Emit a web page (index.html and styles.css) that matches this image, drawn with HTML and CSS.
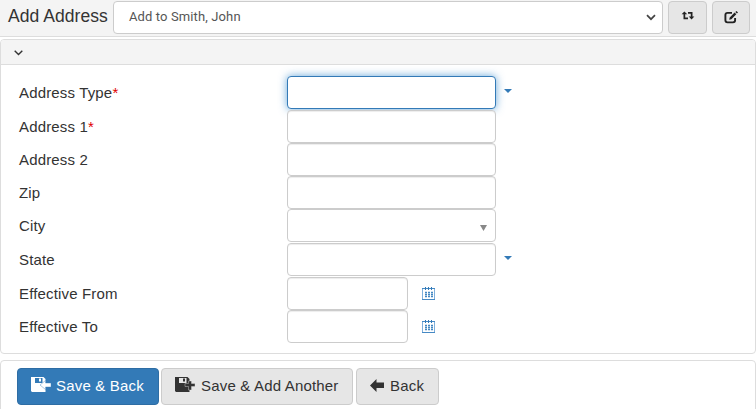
FILE: index.html
```html
<!DOCTYPE html>
<html lang="en">
<head>
<meta charset="utf-8">
<title>Add Address</title>
<link rel="stylesheet" href="styles.css">
</head>
<body>
<svg class="defs" width="0" height="0">
  <symbol id="disk" viewBox="0 0 21 16">
    <path fill="currentColor" fill-rule="evenodd" d="M0 0h12.500L14.500 2V15H1L0 14zM4 1v5h7.500V1z"/>
    <path fill="currentColor" d="M8 1.500h2v3H8z"/>
  </symbol>
  <symbol id="calendar" viewBox="0 0 14 14">
    <path d="M.500 1v12M12.500 1v12" fill="none" stroke="#7fb0dc"/>
    <path d="M0 1.500h13M0 12.500h13" stroke="#4689c4"/>
    <path d="M3.500 0v3M6.500 0v3M9.500 0v3" stroke="#337ab7"/>
    <path d="M3 5.500h8M3 7.500h8M3 9.500h8" stroke="#4387c2" stroke-width="1.300" stroke-dasharray="2 1"/>
  </symbol>
</svg>
<header class="topbar">
  <h1>Add Address</h1>
  <div class="record"><span>Add to Smith, John</span>
    <svg width="10" height="7" viewBox="0 0 10 7"><path d="M1 1.200l4 4 4-4" fill="none" stroke="#444" stroke-width="1.700"/></svg>
  </div>
  <button class="tool" aria-label="Switch"><svg class="switch" width="14" height="10" viewBox="0 0 14 11"><path d="M3 3v5.200h4M7 2h4v5" fill="none" stroke="#222" stroke-width="1.900"/><path d="M0 3.700L3 .500l3.200 3.200zM7.800 6h6.200l-3.100 3.400z" fill="#222"/></svg></button>
  <button class="tool edit" aria-label="Edit"><svg width="14" height="13" viewBox="0 0 14 13"><path d="M8 1.900H3.500Q1.400 1.900 1.400 4v5.300q0 2.100 2.100 2.100H9q2.100 0 2.100-2.100V7" fill="none" stroke="#222" stroke-width="1.900"/><path d="M5.200 8.800l.500-2.300 4.900-4.900 1.700 1.700-4.900 4.900zM11.300 1l1.200-1L14 1.400l-1.100 1.200z" fill="#222"/></svg></button>
</header>
<main class="panel">
  <div class="panel-head"><svg width="9" height="6" viewBox="0 0 9 6"><path d="M.700.700l3.800 3.700L8.300.700" fill="none" stroke="#333" stroke-width="1.400"/></svg></div>
  <form class="fields">
    <div class="row tall"><label for="type">Address Type<b>*</b></label><input id="type" class="active"><i class="caret"></i></div>
    <div class="row"><label for="a1">Address 1<b>*</b></label><input id="a1"></div>
    <div class="row"><label for="a2">Address 2</label><input id="a2"></div>
    <div class="row"><label for="zip">Zip</label><input id="zip"></div>
    <div class="row tall"><label>City</label><div class="combo"><i></i></div></div>
    <div class="row tall"><label for="state">State</label><input id="state"><i class="caret"></i></div>
    <div class="row"><label for="from">Effective From</label><input id="from" class="date"><svg class="cal" width="14" height="14"><use href="#calendar"/></svg></div>
    <div class="row"><label for="to">Effective To</label><input id="to" class="date"><svg class="cal" width="14" height="14"><use href="#calendar"/></svg></div>
  </form>
</main>
<footer class="actions">
  <button class="btn primary"><svg width="21" height="16" viewBox="0 0 21 16"><use href="#disk"/><path d="M9 8L14.500 3.500V6H20v4h-5.500v2.500z" fill="#fff" stroke="#337ab7" stroke-width=".400"/></svg>Save &amp; Back</button>
  <button class="btn another"><svg width="21" height="16" viewBox="0 0 21 16"><use href="#disk"/><path d="M13.500 4h3v2.500H20v3h-3.500V13h-3V9.500H10v-3h3.500z" fill="#333" stroke="#e6e6e6" stroke-width=".400"/></svg>Save &amp; Add Another</button>
  <button class="btn back"><svg width="15" height="13" viewBox="0 0 15 13"><path d="M0 6.500L6.500 0v3.500H14v5.500H6.500V13z" fill="#333"/></svg>Back</button>
</footer>
</body>
</html>
```
FILE: styles.css
```css
* { box-sizing: border-box; }
body { margin: 0; height: 409px; overflow: hidden; background: #fff; color: #333; font: 15px/20px "Liberation Sans", Arial, sans-serif; letter-spacing: .16px; }
button, input { font: inherit; letter-spacing: inherit; color: inherit; }
svg { display: block; flex: none; }
.defs { position: absolute; }
.topbar { display: flex; height: 37px; padding: 1px 6px 0 8px; background: #f4f4f4; border-bottom: 1px solid #ddd; }
h1 { width: 105px; flex: none; margin: 0; padding-top: 5px; font-size: 17.5px; font-weight: 400; line-height: 20px; letter-spacing: .06px; white-space: nowrap; }
.record { display: flex; align-items: center; justify-content: space-between; width: 550px; height: 33px; padding: 0 6px 0 15px; background: #fff; border: 1px solid #ccc; border-radius: 4px; color: #555; font: 13px/20px Roboto, "Liberation Sans", sans-serif; letter-spacing: .12px; }
.record span { padding-bottom: 1px; }
.tool { display: flex; align-items: center; justify-content: center; width: 39px; height: 33px; margin-left: 5px; padding: 0 0 3px; background: #e6e6e6; border: 1px solid #ccc; border-radius: 4px; }
.tool.edit { width: 38px; padding: 0 0 1px; }
.panel { height: 315px; margin-top: 2px; border: 1px solid #ddd; border-radius: 4px; overflow: hidden; }
.panel-head { height: 25px; padding: 10px 13px; background: #f4f4f4; border-bottom: 1px solid #ddd; }
.fields { padding: 11px 0 0 18px; }
.row { display: flex; height: 33px; }
.row.tall { height: 34px; }
label { width: 268px; padding-top: 7px; }
label b { color: #e00000; font-weight: 400; }
input, .combo { width: 209px; height: 33px; padding: 6px 12px; background: #fff; border: 1px solid #ccc; border-radius: 4px; box-shadow: inset 0 1px 1px rgba(0,0,0,.075); outline: 0; }
.active { border-color: #337ab7; box-shadow: 0 0 8px rgba(51,136,204,.75); }
.combo { display: flex; justify-content: flex-end; padding: 15px 8px 0; box-shadow: none; }
.combo i { width: 7px; height: 6px; background: #888; clip-path: polygon(0 0, 100% 0, 50% 100%); }
.caret { width: 8px; height: 4px; margin: 13px 0 0 8px; background: #337ab7; clip-path: polygon(0 0, 100% 0, 50% 100%); }
.date { width: 121px; }
.cal { margin: 10px 0 0 14px; }
.actions { display: flex; height: 60px; margin-top: 6px; padding: 7px 0 0 16px; border: 1px solid #ddd; border-radius: 4px; }
.btn { display: flex; align-items: center; height: 37px; padding: 0 0 2px 13px; background: #e6e6e6; border: 1px solid #ccc; border-radius: 4px; white-space: nowrap; letter-spacing: .18px; }
.btn svg { margin-right: 5px; }
.primary svg, .another svg { margin-bottom: 2px; }
.primary { width: 142px; background: #337ab7; border-color: #2e6da4; color: #fff; }
.primary svg { margin-right: 4px; }
.another { width: 192px; margin-left: 2px; }
.back { width: 83px; margin-left: 3px; }
```
